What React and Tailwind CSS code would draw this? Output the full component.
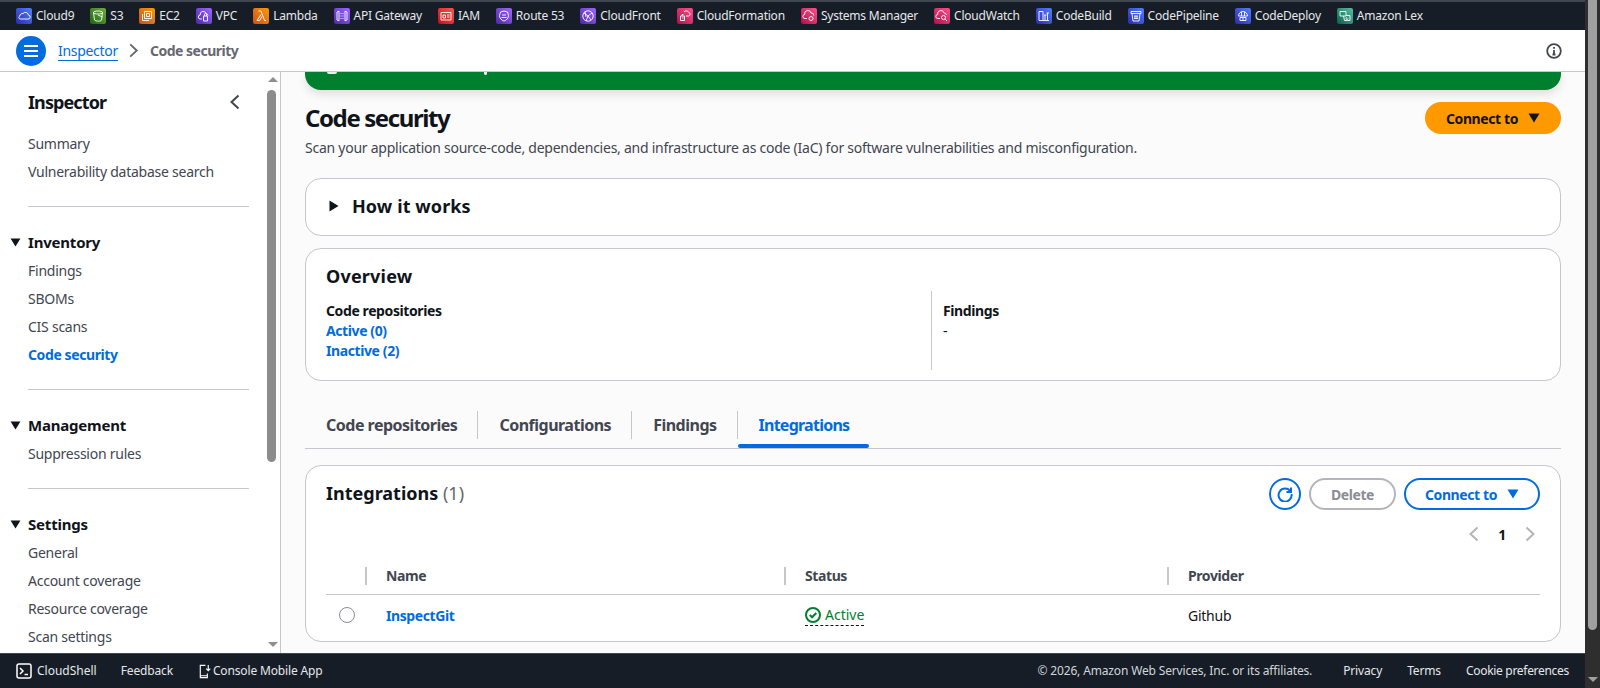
import React from 'react'

const services = [
  { name: 'Cloud9', bg: 'bg-linear-to-tr from-[#2e27ad] to-[#527fff]', d: 'M4 11h8a2 2 0 0 0 .4-4A3 3 0 0 0 7 5.6 2.6 2.6 0 0 0 3.8 8 1.6 1.6 0 0 0 4 11z' },
  { name: 'S3', bg: 'bg-linear-to-tr from-[#1b660f] to-[#6cae3e]', d: 'M3.5 4.5c0-2 9-2 9 0l-1 7.500c0 1.500-6 1.500-7 0zM3.500 4.500c0 2 9 2 9 0M8 7l4.500 2' },
  { name: 'EC2', bg: 'bg-linear-to-tr from-[#c8511b] to-[#ff9900]', d: 'M5.500 3.500h7v7h-7zM3.500 6v6.500H10M7.500 5.500h3v3h-3z' },
  { name: 'VPC', bg: 'bg-linear-to-tr from-[#4d27a8] to-[#a166ff]', d: 'M6 11H4.500a2 2 0 0 1-.3-4A3 3 0 0 1 10 5.500a2.500 2.500 0 0 1 2 2M7.500 8h4v5h-4zM8.500 8V6.500a1 1 0 0 1 2 0V8' },
  { name: 'Lambda', bg: 'bg-linear-to-tr from-[#c8511b] to-[#ff9900]', d: 'M5.500 3H8l3.500 9.500H13M8 6.500 4 12.500h2.500L9 8.500' },
  { name: 'API Gateway', bg: 'bg-linear-to-tr from-[#4d27a8] to-[#a166ff]', d: 'M3 4l2-.800v9.600L3 12zM13 4l-2-.800v9.600l2-.800zM7 5v1M9 5v1M7 7.500v1M9 7.500v1M7 10v1M9 10v1' },
  { name: 'IAM', bg: 'bg-linear-to-tr from-[#bd0816] to-[#ff5252]', d: 'M3 4.500h10v7.500H3zM5 7h2.500v3H5zM9 7h2.500M9 9h2.500' },
  { name: 'Route 53', bg: 'bg-linear-to-tr from-[#4d27a8] to-[#a166ff]', d: 'M4.500 4 8 3l3.500 1 1 3.500c0 3-2.500 5-4.500 5.500-2-.5-4.500-2.500-4.500-5.500zM6 7h4M5.500 9.500h5' },
  { name: 'CloudFront', bg: 'bg-linear-to-tr from-[#4d27a8] to-[#a166ff]', d: 'M8 2.800a5.200 5.200 0 1 0 0 10.400A5.200 5.200 0 0 0 8 2.800zM4 5l4 3 4-3M8 8l-2 5M8 8l3 4M5 3.500 6 9' },
  { name: 'CloudFormation', bg: 'bg-linear-to-tr from-[#b0084d] to-[#ff4f8b]', d: 'M9 8h2.500a1.800 1.800 0 0 0 .3-3.500A2.800 2.800 0 0 0 7 4M3.500 8h4v4.500h-4zM5 8V6.500h1.500M5 10h1.500' },
  { name: 'Systems Manager', bg: 'bg-linear-to-tr from-[#b0084d] to-[#ff4f8b]', d: 'M6 10.500H4a2 2 0 0 1-.3-4A3.200 3.200 0 0 1 10 5a2.500 2.500 0 0 1 2.800 2.500M10 8.500a2 2 0 1 0 0 4 2 2 0 0 0 0-4z' },
  { name: 'CloudWatch', bg: 'bg-linear-to-tr from-[#b0084d] to-[#ff4f8b]', d: 'M6 10.500H4a2 2 0 0 1-.3-4A3.200 3.200 0 0 1 10 5a2.500 2.500 0 0 1 2.500 2M9.500 7.500a2 2 0 1 0 0 4 2 2 0 0 0 0-4zM11 11l2 2' },
  { name: 'CodeBuild', bg: 'bg-linear-to-tr from-[#2e27ad] to-[#527fff]', d: 'M3 3.500h4v9H3zM7 12.500h6M9 12.500V7M11.500 12.500V5M8 7h2.500M10.500 5h2.500' },
  { name: 'CodePipeline', bg: 'bg-linear-to-tr from-[#2e27ad] to-[#527fff]', d: 'M3 3.500h10v2H3zM4 5.500 5 13h6l1-7.500M6 8h4M6 10.500h4M7 8v2.500M9 8v2.500' },
  { name: 'CodeDeploy', bg: 'bg-linear-to-tr from-[#2e27ad] to-[#527fff]', d: 'M3.500 8a4.500 4.500 0 0 1 9 0zM6.500 3.800V8M9.500 3.800V8M5 9.500h6v3H5zM8 9.500v3' },
  { name: 'Amazon Lex', bg: 'bg-linear-to-tr from-[#055f4e] to-[#56c0a7]', d: 'M3 3.500h6v4.500H3zM6.500 8l1 4.500h5.500V7.500H9M10 9.500a1 1 0 1 0 1 1' },
]

const ServiceIcon = ({ bg, d }) => (
  <span className={`flex h-4 w-4 shrink-0 items-center justify-center rounded-[2px] ${bg}`}>
    <svg viewBox="0 0 16 16" className="h-4 w-4" fill="none" stroke="#fff" strokeWidth="0.9" strokeLinejoin="round">
      <path d={d} />
    </svg>
  </span>
)

const Caret = ({ className }) => (
  <svg viewBox="0 0 12 10" className={className} fill="currentColor">
    <path d="M0.500 0.500h11L6 9.500z" />
  </svg>
)

const Chevron = ({ dir, className }) => (
  <svg viewBox="0 0 16 16" className={className} fill="none" stroke="currentColor" strokeWidth="2">
    <path d={dir === 'left' ? 'M11.500 1.500 4.500 8l7 6.500' : 'M4.500 1.500 11.500 8l-7 6.500'} />
  </svg>
)

const navItem = 'block py-1 text-[14px] leading-5 text-[#424650]'

const SideGroup = ({ title, items }) => (
  <div>
    <div className="mt-[25px] flex h-5 items-center">
      <Caret className="ml-[10px] mr-[7px] h-[9px] w-[11px] text-[#0f141a]" />
      <span className="text-[15px] font-bold leading-5 tracking-[-0.2px] text-[#0f141a]">{title}</span>
    </div>
    <div className="mt-[5px] pl-[28px]">
      {items.map((i) => (
        <a key={i} className={i === 'Code security' ? 'block py-1 text-[14px] font-bold leading-5 tracking-[-0.4px] text-[#006ce0]' : navItem}>{i}</a>
      ))}
    </div>
  </div>
)

const Divider = () => <div className="ml-[28px] mt-5 h-px w-[221px] bg-[#c6c6cd]" />

const tabs = ['Code repositories', 'Configurations', 'Findings', 'Integrations']

export default function App() {
  return (
    <div className="flex h-[688px] w-[1600px] overflow-hidden bg-white font-['Noto_Sans',sans-serif] text-[14px] tracking-[-0.25px] text-[#0f141a]">
      <div className="flex min-w-0 flex-1 flex-col">
        {/* service bar */}
        <div className="flex h-[30px] shrink-0 items-center gap-4 border-t-2 border-[#414750] bg-[#161d26] pl-4">
          {services.map((s) => (
            <div key={s.name} className="flex items-center gap-1 text-[12px] tracking-[-0.22px] text-[#e5e7eb]">
              <ServiceIcon bg={s.bg} d={s.d} />
              <span className="whitespace-nowrap">{s.name}</span>
            </div>
          ))}
        </div>

        {/* breadcrumbs */}
        <div className="flex h-[42px] shrink-0 items-center border-b border-[#c6c6cd] bg-white pl-4 pr-[23px]">
          <button className="flex h-[30px] w-[30px] items-center justify-center rounded-full bg-[#006ce0]">
            <svg viewBox="0 0 16 16" className="h-4 w-4" fill="none" stroke="#fff" strokeWidth="2">
              <path d="M1 3h14M1 8h14M1 13h14" />
            </svg>
          </button>
          <a className="ml-3 border-b border-[#006ce0] text-[14px] leading-[19px] tracking-[-0.3px] text-[#006ce0]">Inspector</a>
          <Chevron dir="right" className="ml-2 h-[15px] w-[15px] text-[#656871]" />
          <span className="ml-[9px] text-[14px] font-bold tracking-[-0.5px] text-[#656871]">Code security</span>
          <svg viewBox="0 0 16 16" className="ml-auto h-4 w-4" fill="none" stroke="#424650" strokeWidth="1.800">
            <circle cx="8" cy="8" r="6.800" />
            <path d="M8 7v4.500M6.500 11.500h3M8 4v1.800" />
          </svg>
        </div>

        <div className="flex min-h-0 flex-1">
          {/* side nav */}
          <div className="relative w-[281px] shrink-0 overflow-hidden border-r border-[#c6c6cd] bg-white">
            <div className="flex items-center justify-between pl-[28px] pr-[37px] pt-[18px]">
              <span className="text-[18px] font-bold leading-6 tracking-[-0.9px]">Inspector</span>
              <Chevron dir="left" className="h-4 w-4 text-[#424650]" />
            </div>
            <div className="mt-4 pl-[28px]">
              <a className={navItem}>Summary</a>
              <a className={navItem}>Vulnerability database search</a>
            </div>
            <Divider />
            <SideGroup title="Inventory" items={['Findings', 'SBOMs', 'CIS scans', 'Code security']} />
            <Divider />
            <SideGroup title="Management" items={['Suppression rules']} />
            <Divider />
            <SideGroup title="Settings" items={['General', 'Account coverage', 'Resource coverage', 'Scan settings']} />
            {/* sidebar scrollbar */}
            <div className="absolute right-0 top-0 h-full w-[15px] bg-white">
              <div className="absolute left-[3px] top-[5px] h-0 w-0 border-x-[5px] border-b-[5px] border-x-transparent border-b-[#8f8f8f]" />
              <div className="absolute left-[2px] top-[18px] h-[372px] w-[9px] rounded-full bg-[#8c8c8c]" />
              <div className="absolute bottom-[6px] left-[3px] h-0 w-0 border-x-[5px] border-t-[5px] border-x-transparent border-t-[#8f8f8f]" />
            </div>
          </div>

          {/* main content */}
          <div className="min-w-0 flex-1 overflow-hidden bg-[#fbfbfb] px-6">
            <div className="relative h-[18px] rounded-b-2xl bg-[#00802f] shadow-[0_4px_10px_rgba(0,0,0,0.12)]">
              <span className="absolute left-[22px] top-0 h-[2px] w-[10px] rounded-b-full bg-white/90" />
              <span className="absolute left-[179px] top-0 h-[3px] w-[3px] rounded-b-full bg-white/90" />
            </div>

            <div className="mt-3 flex items-start justify-between">
              <h1 className="text-[24px] font-bold leading-8 tracking-[-1.4px]">Code security</h1>
              <button className="flex h-8 w-[136px] items-center justify-center gap-[10px] rounded-full bg-[#ff9900] text-[14px] font-bold tracking-[-0.4px] text-[#0f141a]">
                Connect to
                <Caret className="h-[10px] w-[12px]" />
              </button>
            </div>
            <p className="mt-1 text-[14px] leading-5 text-[#424650]">
              Scan your application source-code, dependencies, and infrastructure as code (IaC) for software vulnerabilities and misconfiguration.
            </p>

            <div className="mt-5 flex h-[58px] items-center rounded-2xl border border-[#c6c6cd] bg-white pb-[2px] pl-[22px]">
              <Caret className="h-[10px] w-[12px] -rotate-90 text-[#0f141a]" />
              <span className="ml-3 text-[18px] font-bold tracking-[0.1px]">How it works</span>
            </div>

            <div className="mt-3 h-[133px] rounded-2xl border border-[#c6c6cd] bg-white px-5 pt-[15px]">
              <h2 className="text-[18px] font-bold leading-6 tracking-[0.2px]">Overview</h2>
              <div className="mt-[3px] grid h-[79px] grid-cols-[606px_1fr]">
                <div className="border-r border-[#c6c6cd] pt-[10px] font-bold leading-5 tracking-[-0.4px]">
                  <div>Code repositories</div>
                  <a className="block text-[#006ce0]">Active (0)</a>
                  <a className="block text-[#006ce0]">Inactive (2)</a>
                </div>
                <div className="pl-[11px] pt-[10px] leading-5">
                  <div className="font-bold tracking-[-0.4px]">Findings</div>
                  <div>-</div>
                </div>
              </div>
            </div>

            {/* tabs */}
            <div className="mt-[30px] flex h-[38px] items-start border-b border-[#c6c6cd]">
              {tabs.map((t, i) => (
                <div
                  key={t}
                  className={
                    i === 3
                      ? 'relative flex h-7 items-center pl-[21px] pr-5 text-[16px] font-bold tracking-[-0.75px] text-[#006ce0]'
                      : 'flex h-7 items-center border-r border-[#c6c6cd] pl-[21px] pr-5 text-[16px] font-bold tracking-[-0.5px] text-[#424650]'
                  }
                >
                  {t}
                  {i === 3 && <span className="absolute inset-x-0 top-[33px] h-1 rounded-full bg-[#006ce0]" />}
                </div>
              ))}
            </div>

            {/* integrations table */}
            <div className="mt-4 h-[177px] rounded-2xl border border-[#c6c6cd] bg-white px-5 pt-3">
              <div className="flex items-center justify-between">
                <h2 className="-mt-[2px] text-[18px] font-bold leading-8 tracking-normal">
                  Integrations <span className="font-normal text-[#656871]">(1)</span>
                </h2>
                <div className="flex items-center gap-2">
                  <button className="flex h-8 w-8 items-center justify-center rounded-full border-2 border-[#006ce0] text-[#006ce0]">
                    <svg viewBox="0 0 16 16" className="h-4 w-4" fill="none" stroke="currentColor" strokeWidth="2">
                      <path d="M13.500 5.500A6.500 6.500 0 1 0 14.500 8M9.500 6h4.500V1.500" />
                    </svg>
                  </button>
                  <button className="h-8 w-[87px] rounded-full border-2 border-[#b4b4bb] text-[14px] font-bold tracking-[-0.4px] text-[#8c8c94]">Delete</button>
                  <button className="flex h-8 w-[136px] items-center justify-center gap-[10px] rounded-full border-2 border-[#006ce0] text-[14px] font-bold tracking-[-0.4px] text-[#006ce0]">
                    Connect to
                    <Caret className="h-[10px] w-[12px]" />
                  </button>
                </div>
              </div>

              <div className="mt-3 flex h-6 items-center justify-end pr-[2px]">
                <Chevron dir="left" className="h-4 w-4 text-[#b4b4bb]" />
                <span className="mx-4 text-[14px] font-bold">1</span>
                <Chevron dir="right" className="h-4 w-4 text-[#b4b4bb]" />
              </div>

              <div className="mt-3 grid h-[37px] grid-cols-[39px_419px_383px_1fr] items-center border-b border-[#c6c6cd] text-[14px] font-bold tracking-[-0.4px] text-[#424650]">
                <div />
                <div className="h-[18px] border-l-2 border-[#c6c6cd] pl-[19px] leading-[18px]">Name</div>
                <div className="h-[18px] border-l-2 border-[#c6c6cd] pl-[19px] leading-[18px]">Status</div>
                <div className="h-[18px] border-l-2 border-[#c6c6cd] pl-[19px] leading-[18px]">Provider</div>
              </div>
              <div className="grid h-10 grid-cols-[39px_419px_383px_1fr] items-center text-[14px]">
                <div className="ml-[13px] h-4 w-4 rounded-full border border-[#8c8c94]" />
                <a className="pl-[21px] font-bold tracking-[-0.4px] text-[#006ce0]">InspectGit</a>
                <div className="flex items-center pl-[21px]">
                  <span className="flex items-center gap-1 border-b border-dashed border-[#0f141a] leading-5 tracking-normal text-[#00802f]">
                    <svg viewBox="0 0 16 16" className="h-4 w-4" fill="none" stroke="currentColor" strokeWidth="2">
                      <circle cx="8" cy="8" r="7" />
                      <path d="M4.800 8l2.300 2.300 4.200-4.300" />
                    </svg>
                    Active
                  </span>
                </div>
                <div className="pl-[21px] text-[#0f141a]">Github</div>
              </div>
            </div>
          </div>
        </div>

        {/* footer */}
        <div className="flex h-[35px] shrink-0 items-center border-t border-[#414750] bg-[#161d26] pl-4 pr-4 text-[12px] tracking-[-0.15px] text-[#e5e7eb]">
          <svg viewBox="0 0 16 16" className="h-4 w-4" fill="none" stroke="#fff" strokeWidth="1.500">
            <rect x="1" y="1" width="14" height="14" rx="2" />
            <path d="M4 5l3 3-3 3M8.500 11.500H12" />
          </svg>
          <span className="ml-[5px] tracking-normal">CloudShell</span>
          <span className="ml-6">Feedback</span>
          <svg viewBox="0 0 16 16" className="ml-6 h-[15px] w-[15px]" fill="none" stroke="#fff" strokeWidth="1.200">
            <path d="M9 1.500H3.500v13h7.500V10M3.500 12.500H11M12 1v6M9.800 5 12 7.200 14.200 5" />
          </svg>
          <span className="ml-px">Console Mobile App</span>
          <span className="ml-auto text-[#d1d5db]">© 2026, Amazon Web Services, Inc. or its affiliates.</span>
          <span className="ml-[31px]">Privacy</span>
          <span className="ml-[25px]">Terms</span>
          <span className="ml-[25px] tracking-[-0.3px]">Cookie preferences</span>
        </div>
      </div>

      {/* window scrollbar */}
      <div className="relative w-[15px] shrink-0 bg-[#2e2e2e]">
        <div className="ml-[3px] h-[630px] w-[9px] rounded-b-full bg-[#a0a0a0]" />
        <div className="absolute bottom-[6px] left-[3px] h-0 w-0 border-x-[5px] border-t-[5px] border-x-transparent border-t-[#a0a0a0]" />
      </div>
    </div>
  )
}
